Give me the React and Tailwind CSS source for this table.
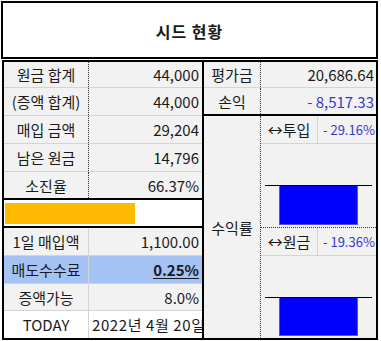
const font = { fontFamily: '"Noto Sans CJK KR", "Noto Sans", sans-serif' };

const Cell = ({ children, className = "" }) => (
  <div className={`flex items-center overflow-hidden whitespace-nowrap ${className}`}>{children}</div>
);

const LeftRow = ({ label, value, h = "h-[28px]", bg = "bg-[#f2f2f2]", sep = "border-dotted border-[#333]", bottom = "border-b border-[#d4d4d4]", valueClass = "" }) => (
  <div className={`flex ${h} ${bg} ${bottom}`}>
    <Cell className={`w-[85px] justify-center border-r ${sep}`}>{label}</Cell>
    <Cell className={`flex-1 justify-end pr-[3px] ${valueClass}`}>{value}</Cell>
  </div>
);

const MiniChart = ({ label, value, lineTop, barH, bottom }) => (
  <div className={`flex flex-col flex-1 ${bottom}`}>
    <div className="flex h-[28px] border-b border-[#d4d4d4]">
      <Cell className="w-[57px] justify-center border-r border-[#d4d4d4] text-[15px]">{label}</Cell>
      <Cell className="flex-1 pl-[5px] text-[13px] text-[#3838c8]">{value}</Cell>
    </div>
    <div className="flex-1 flex flex-col px-[4px]">
      <div className={lineTop} />
      <div className="border-t border-black" />
      <div className={`mx-[14px] ${barH} bg-[#0000ff] border border-[#5050ff] border-t-0`} />
    </div>
  </div>
);

export default function App() {
  return (
    <div className="w-[381px] h-[341px] bg-white text-[15px] text-[#1a1a1a] leading-none" style={font}>
      <div className="ml-[1px] mt-[1px] w-[377px] h-[58px] border-2 border-black flex items-center justify-center">
        <span className="font-bold text-[16px] tracking-[1px] pt-[1px]">시드 현황</span>
      </div>

      <div className="ml-[2px] mt-[1px] w-[376px] border-2 border-black flex">
        <div className="w-[200px] flex flex-col border-r-2 border-black">
          <LeftRow label="원금 합계" value="44,000" h="h-[26px]" />
          <LeftRow label="(증액 합계)" value="44,000" />
          <LeftRow label="매입 금액" value="29,204" />
          <LeftRow label="남은 원금" value="14,796" />
          <LeftRow label="소진율" value="66.37%" bottom="border-b-2 border-black" />
          <div className="h-[28px] bg-white border-b-2 border-black flex items-center pl-[1px]">
            <div className="w-[130px] h-[21px] bg-[#ffb900]" />
          </div>
          <LeftRow label="1일 매입액" value="1,100.00" sep="border-solid border-[#d4d4d4]" />
          <LeftRow
            label="매도수수료"
            value="0.25%"
            bg="bg-[#a4c2f4]"
            sep="border-solid border-[#d4d4d4]"
            valueClass="font-bold underline underline-offset-2"
          />
          <LeftRow label="증액가능" value="8.0%" h="h-[27px]" sep="border-solid border-[#d4d4d4]" />
          <div className="flex h-[27px] bg-white">
            <Cell className="w-[85px] justify-center border-r border-[#d4d4d4]">TODAY</Cell>
            <Cell className="flex-1 pl-[3px] tracking-[0.6px]">2022년 4월 20일</Cell>
          </div>
        </div>

        <div className="flex-1 flex flex-col bg-[#f2f2f2]">
          <div className="flex h-[26px] border-b border-[#d4d4d4]">
            <Cell className="w-[57px] justify-center border-r border-dotted border-[#333]">평가금</Cell>
            <Cell className="flex-1 justify-end pr-[2px]">20,686.64</Cell>
          </div>
          <div className="flex h-[28px] border-b-2 border-black">
            <Cell className="w-[57px] justify-center border-r border-dotted border-[#333]">손익</Cell>
            <Cell className="flex-1 justify-end pr-[2px] text-[#3838c8]">- 8,517.33</Cell>
          </div>
          <div className="flex-1 flex">
            <Cell className="w-[57px] justify-center border-r border-dotted border-[#333]">수익률</Cell>
            <div className="flex-1 flex flex-col">
              <MiniChart
                label="↔투입"
                value="- 29.16%"
                lineTop="h-[41px]"
                barH="h-[39px]"
                bottom="border-b border-dotted border-[#333]"
              />
              <MiniChart label="↔원금" value="- 19.36%" lineTop="h-[41px]" barH="h-[38px]" bottom="" />
            </div>
          </div>
        </div>
      </div>
    </div>
  );
}
